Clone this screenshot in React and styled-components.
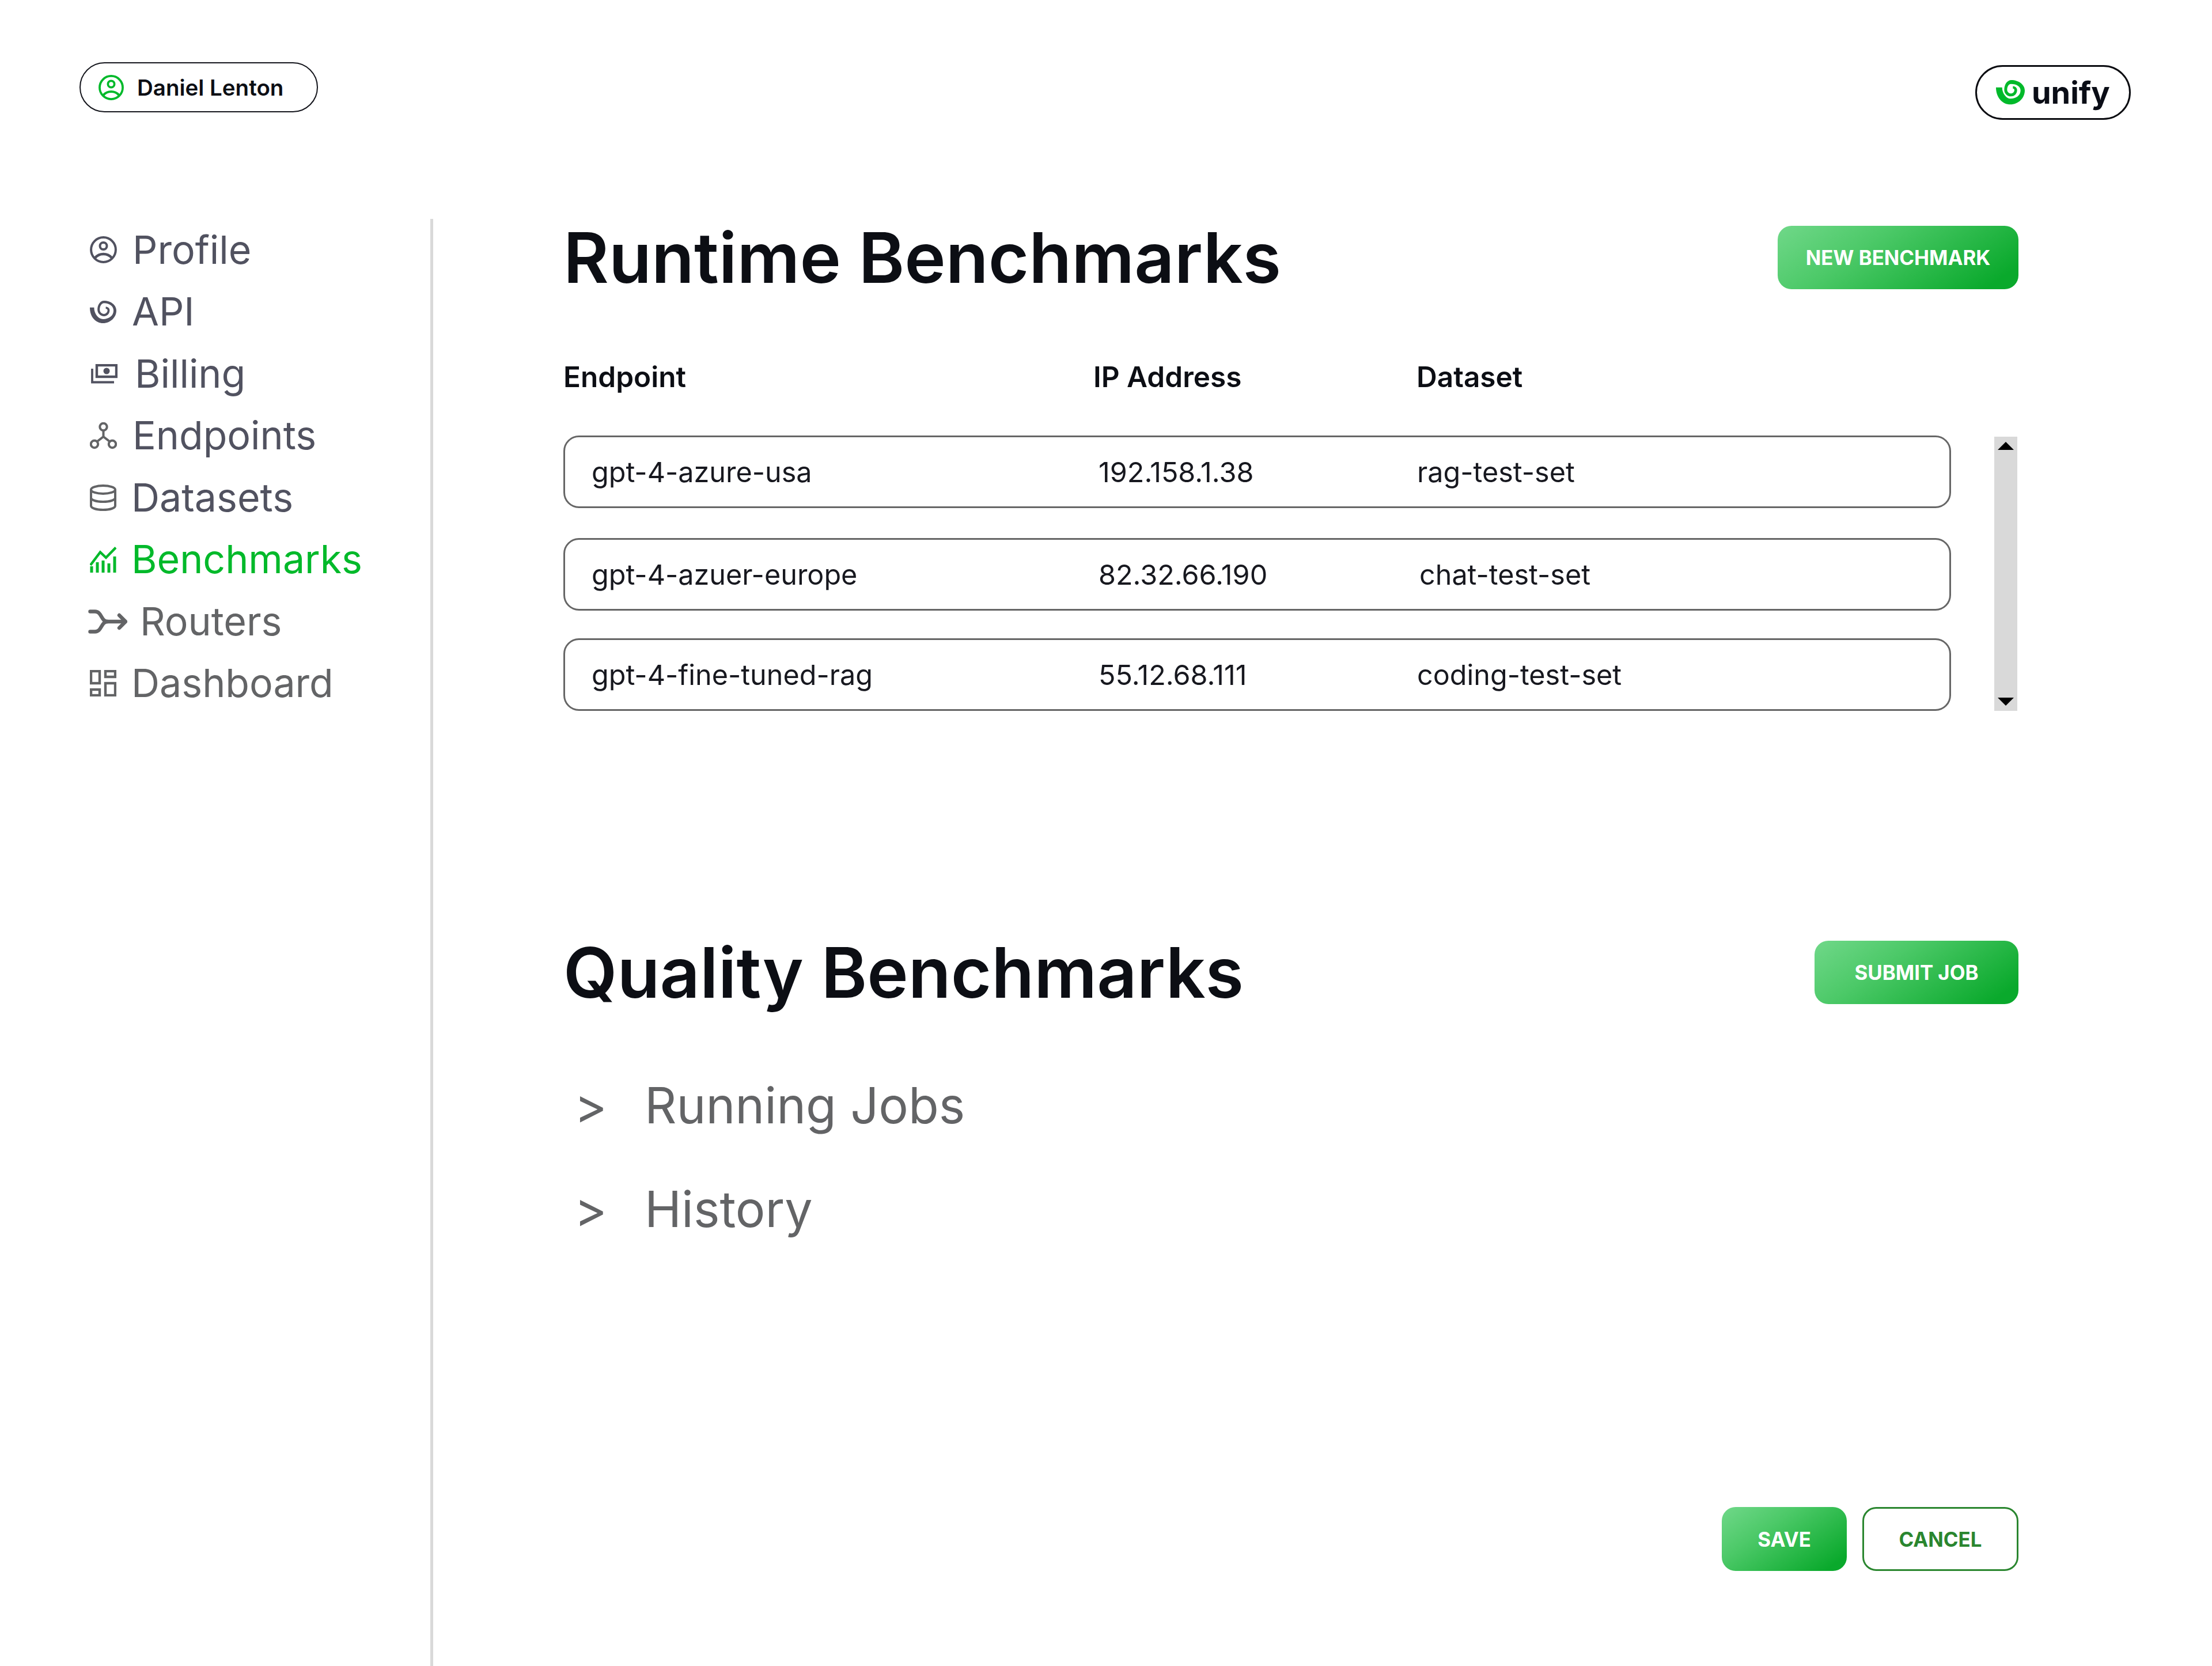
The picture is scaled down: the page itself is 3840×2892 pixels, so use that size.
import React from "react";
import styled, { createGlobalStyle } from "styled-components";

const Global = createGlobalStyle`
  html, body { margin: 0; padding: 0; background: #fff; }
  body { font-family: Inter, "Noto Sans", sans-serif; color: #0c0e14; }
  * { box-sizing: border-box; }
`;

const Page = styled.div`
  width: 3840px;
  height: 2892px;
  display: flex;
  flex-direction: column;
  overflow: hidden;
`;
const Topbar = styled.header`
  height: 380px;
  display: flex;
  justify-content: space-between;
  align-items: flex-start;
  padding: 108px 141px 0 138px;
`;
const UserPill = styled.div`
  width: 414px;
  height: 87px;
  border: 2px solid #14151c;
  border-radius: 44px;
  display: flex;
  align-items: center;
  gap: 23px;
  padding-left: 31px;
  font-size: 38.5px;
  font-weight: 600;
`;
const LogoPill = styled.div`
  width: 270px;
  height: 95px;
  margin-top: 5px;
  border: 3px solid #0a0b10;
  border-radius: 48px;
  display: flex;
  align-items: center;
  gap: 12px;
  padding-left: 33px;
  font-size: 54px;
  font-weight: 700;
  color: #0a0d16;
`;
const Body = styled.div`
  flex: 1;
  display: flex;
`;
const Sidebar = styled.nav`
  width: 752px;
  flex: none;
  border-right: 5px solid #d9d9d9;
  padding-left: 150px;
`;
const NavItem = styled.div`
  height: 107.5px;
  display: flex;
  align-items: center;
  font-size: 68px;
  font-weight: 400;
  color: ${(p) => (p.$active ? "#00b92a" : p.$tone || "#515260")};
`;
const NavLabel = styled.span`
  margin-top: -2px;
`;
const NavGlyph = styled.span`
  width: ${(p) => p.$w}px;
  flex: none;
  display: flex;
  svg { display: block; margin-left: ${(p) => p.$x}px; }
`;
const Main = styled.main`
  flex: 1;
  padding: 0 336px 0 226px;
`;
const SectionHead = styled.div`
  height: 110px;
  display: flex;
  align-items: center;
  justify-content: space-between;
  margin-top: ${(p) => p.$top}px;
`;
const Title = styled.h1`
  margin: 0;
  font-size: 121px;
  font-weight: 600;
  line-height: 110px;
  color: #0c0e14;
`;
const GreenButton = styled.button`
  width: ${(p) => p.$w}px;
  height: ${(p) => p.$h || 110}px;
  border: none;
  border-radius: 24px;
  background: linear-gradient(145deg, #70d889 0%, #4cc968 35%, #0aa92c 90%);
  color: #fff;
  font: 650 34.8px Inter, sans-serif;
  padding: 0;
`;
const GhostButton = styled.button`
  width: ${(p) => p.$w}px;
  height: 111px;
  border: 3px solid #2a862f;
  border-radius: 24px;
  background: #fff;
  color: #2a862f;
  font: 650 34.8px Inter, sans-serif;
  padding: 0;
`;
const ColumnHead = styled.div`
  display: grid;
  grid-template-columns: 920px 561px 1fr;
  height: 54px;
  align-items: center;
  margin-top: 122px;
  font-size: 49.5px;
  font-weight: 600;
`;
const TableArea = styled.div`
  display: flex;
  align-items: flex-start;
  justify-content: space-between;
  margin-top: 78px;
  padding-right: 2px;
`;
const Rows = styled.div`
  width: 2409px;
  display: flex;
  flex-direction: column;
`;
const Row = styled.div`
  height: 126px;
  margin-top: ${(p) => p.$top || 0}px;
  border: 3px solid #666;
  border-radius: 27px;
  display: grid;
  grid-template-columns: 880px 553px 1fr;
  align-items: center;
  padding-left: 46px;
  font-size: 48.5px;
  color: #17181f;
`;
const Cell = styled.div`
  padding-left: ${(p) => p.$pad || 0}px;
  white-space: nowrap;
`;
const Scrollbar = styled.div`
  width: 40px;
  height: 476px;
  margin-top: 2px;
  background: #d9d9d9;
  display: flex;
  flex-direction: column;
  align-items: center;
  justify-content: space-between;
  padding: 9px 0;
`;
const Caret = styled.div`
  width: 0;
  height: 0;
  border-left: 14px solid transparent;
  border-right: 14px solid transparent;
  ${(p) => (p.$down ? "border-top: 14px solid #000;" : "border-bottom: 14px solid #000;")}
`;
const Disclosure = styled.div`
  height: 180px;
  display: flex;
  align-items: center;
  font-size: 86.2px;
  color: #636466;
`;
const DisclosureList = styled.div`
  margin-top: 85px;
`;
const Chevron = styled.span`
  width: 141px;
  flex: none;
  padding-left: 19px;
`;
const Footer = styled.div`
  display: flex;
  justify-content: flex-end;
  gap: 27px;
  margin-top: 428px;
`;

const ProfileIcon = ({ size = 47, color = "currentColor", sw = 4 }) => (
  <svg width={size} height={size} viewBox="0 0 47 47" fill="none" stroke={color} strokeWidth={sw}>
    <circle cx="23.5" cy="23.5" r="21.4" />
    <circle cx="23.5" cy="17" r="6" />
    <path d="M9 37.5C13 33 18 31 23.5 31S34 33 38 37.5" strokeWidth={sw + 0.4} />
  </svg>
);

const spiralPaths = {
  bold: "M0 38C0 90 33 127 75 127C117 127 150 93 150 54C150 24 118 0 80 0C58 0 43 24 43 50C43 70 58 85 78 85C98 85 110 70 110 52C110 40 100 32 88 32L88 44C93 44 96 48 96 52C96 62 88 70 78 70C68 70 58 62 58 50C58 34 66 20 78 20C108 20 128 34 128 54C128 80 104 97 75 97C57 97 32 72 32 38Z",
  light: "M0 38C0 92 33 127 75 127C117 127 150 93 150 56C150 24 118 0 80 0C58 0 43 24 43 50C43 72 60 88 80 88C100 88 112 72 112 54C112 42 102 34 90 34L90 46C95 46 100 50 100 54C100 66 90 75 80 75C66 75 56 64 56 50C56 32 66 14 80 14C112 14 134 32 134 56C134 84 108 104 75 104C50 104 24 76 24 38Z",
};

const Spiral = ({ w = 46, color = "currentColor", variant = "light" }) => (
  <svg width={w} height={(w * 127) / 150} viewBox="0 0 150 127" fill={color}>
    <path d={spiralPaths[variant]} />
  </svg>
);

const BillingIcon = () => (
  <svg width="46" height="34" viewBox="0 0 46 34" fill="none" stroke="#515260">
    <rect x="10" y="2" width="34" height="20" strokeWidth="4.4" />
    <circle cx="27" cy="12" r="5.5" fill="#515260" stroke="none" />
    <path d="M2 8V31.5H40" strokeWidth="3.8" />
  </svg>
);

const EndpointIcon = () => (
  <svg width="47" height="47" viewBox="0 0 47 47" fill="none" stroke="#636466" strokeWidth="4">
    <circle cx="23.5" cy="8" r="6.2" />
    <circle cx="8" cy="38" r="6.2" />
    <circle cx="39" cy="38" r="6.2" />
    <path d="M23.5 14.5V25M23.5 25L12.5 33.5M23.5 25L34.5 33.5" />
  </svg>
);

const DatabaseIcon = () => (
  <svg width="46" height="46" viewBox="0 0 46 46" fill="none" stroke="#636466" strokeWidth="4">
    <ellipse cx="23" cy="9" rx="21" ry="7" />
    <path d="M2 9V37C2 41 11 44 23 44S44 41 44 37V9" />
    <path d="M2 23C2 27 11 30 23 30S44 27 44 23" />
  </svg>
);

const ChartIcon = () => (
  <svg width="46" height="46" viewBox="0 0 46 46" fill="none" stroke="#00b92a">
    <path d="M1 33L18 10.5L28 20L45 2.5" strokeWidth="4.4" />
    <path d="M3 46V35M13 46V28M23 46V25M33 46V30M43 46V18" strokeWidth="5" />
  </svg>
);

const RouterIcon = () => (
  <svg width="68" height="42" viewBox="0 0 68 42" fill="none" stroke="#636466" strokeWidth="6.4" strokeLinecap="round" strokeLinejoin="round">
    <path d="M3.5 3.5H12C24 3.5 22 21 34 21H64" />
    <path d="M3.5 38.5H12C24 38.5 22 21 34 21" />
    <path d="M54 10L65 21L54 32" />
  </svg>
);

const DashboardIcon = () => (
  <svg width="46" height="46" viewBox="0 0 46 46" fill="none" stroke="#636466" strokeWidth="4.4">
    <rect x="2" y="2" width="15" height="21" />
    <rect x="27" y="2" width="17" height="10" />
    <rect x="27" y="23" width="17" height="21" />
    <rect x="2" y="34" width="15" height="10" />
  </svg>
);

const nav = [
  { label: "Profile", icon: <ProfileIcon />, w: 80, x: 6 },
  { label: "API", icon: <Spiral />, w: 79, x: 6 },
  { label: "Billing", icon: <BillingIcon />, w: 84, x: 8 },
  { label: "Endpoints", icon: <EndpointIcon />, w: 80, x: 6 },
  { label: "Datasets", icon: <DatabaseIcon />, w: 78, x: 6 },
  { label: "Benchmarks", icon: <ChartIcon />, active: true, w: 78, x: 6 },
  { label: "Routers", icon: <RouterIcon />, tone: "#636466", w: 93, x: 3 },
  { label: "Dashboard", icon: <DashboardIcon />, tone: "#636466", w: 78, x: 6 },
];

const rows = [
  { top: 0, cells: ["gpt-4-azure-usa", "192.158.1.38", "rag-test-set"], pad: 0 },
  { top: 52, cells: ["gpt-4-azuer-europe", "82.32.66.190", "chat-test-set"], pad: 4 },
  { top: 48, cells: ["gpt-4-fine-tuned-rag", "55.12.68.111", "coding-test-set"], pad: 0 },
];

export default function App() {
  return (
    <Page>
      <Global />
      <Topbar>
        <UserPill>
          <ProfileIcon size={44} color="#00b92a" />
          Daniel Lenton
        </UserPill>
        <LogoPill>
          <Spiral w={50} color="#00b92a" variant="bold" />
          <span>unify</span>
        </LogoPill>
      </Topbar>
      <Body>
        <Sidebar>
          {nav.map((n) => (
            <NavItem key={n.label} $active={n.active} $tone={n.tone}>
              <NavGlyph $w={n.w} $x={n.x}>{n.icon}</NavGlyph>
              <NavLabel>{n.label}</NavLabel>
            </NavItem>
          ))}
        </Sidebar>
        <Main>
          <SectionHead $top={12}>
            <Title>Runtime Benchmarks</Title>
            <GreenButton $w={418}>NEW BENCHMARK</GreenButton>
          </SectionHead>
          <ColumnHead>
            <div>Endpoint</div>
            <div>IP Address</div>
            <div>Dataset</div>
          </ColumnHead>
          <TableArea>
            <Rows>
              {rows.map((r) => (
                <Row key={r.cells[0]} $top={r.top}>
                  <Cell>{r.cells[0]}</Cell>
                  <Cell>{r.cells[1]}</Cell>
                  <Cell $pad={r.pad}>{r.cells[2]}</Cell>
                </Row>
              ))}
            </Rows>
            <Scrollbar>
              <Caret />
              <Caret $down />
            </Scrollbar>
          </TableArea>
          <SectionHead $top={399}>
            <Title>Quality Benchmarks</Title>
            <GreenButton $w={354}>SUBMIT JOB</GreenButton>
          </SectionHead>
          <DisclosureList>
            <Disclosure><Chevron>&gt;</Chevron>Running Jobs</Disclosure>
            <Disclosure><Chevron>&gt;</Chevron>History</Disclosure>
          </DisclosureList>
          <Footer>
            <GreenButton $w={217} $h={111}>SAVE</GreenButton>
            <GhostButton $w={271}>CANCEL</GhostButton>
          </Footer>
        </Main>
      </Body>
    </Page>
  );
}
